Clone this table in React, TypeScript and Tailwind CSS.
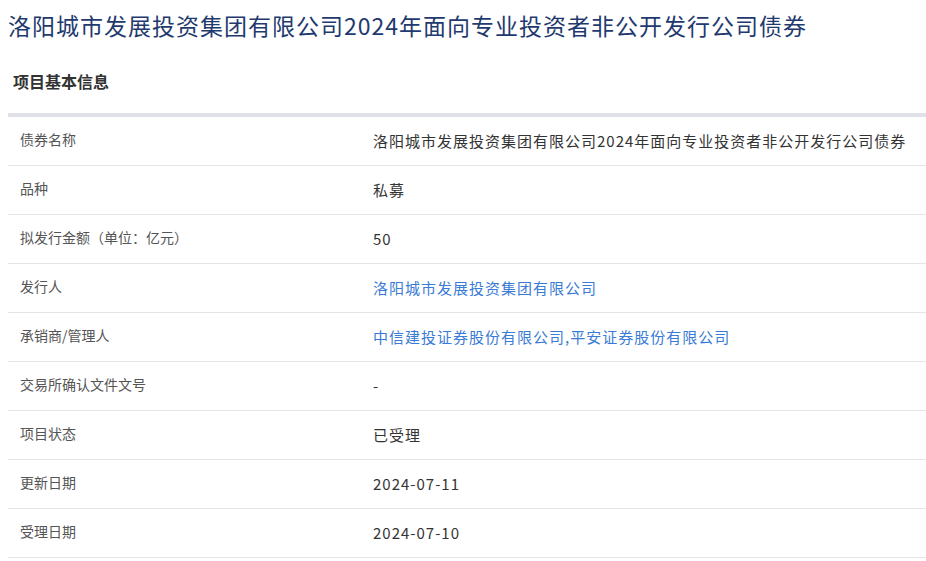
import React from 'react';

interface Row {
  label: string;
  value: string;
  link?: boolean;
}

const rows: Row[] = [
  { label: '债券名称', value: '洛阳城市发展投资集团有限公司2024年面向专业投资者非公开发行公司债券' },
  { label: '品种', value: '私募' },
  { label: '拟发行金额（单位：亿元）', value: '50' },
  { label: '发行人', value: '洛阳城市发展投资集团有限公司', link: true },
  { label: '承销商/管理人', value: '中信建投证券股份有限公司,平安证券股份有限公司', link: true },
  { label: '交易所确认文件文号', value: '-' },
  { label: '项目状态', value: '已受理' },
  { label: '更新日期', value: '2024-07-11' },
  { label: '受理日期', value: '2024-07-10' },
];

const App: React.FC = () => {
  return (
    <div
      className="min-h-screen bg-white pl-2"
      style={{ fontFamily: '"Microsoft YaHei", "Noto Sans CJK SC", "Noto Sans", sans-serif' }}
    >
      {/* Title */}
      <h1 className="pt-[8px] pb-[2px] text-[23px] leading-[34px] tracking-[1px] text-[#1f3a6e] whitespace-nowrap">
        洛阳城市发展投资集团有限公司2024年面向专业投资者非公开发行公司债券
      </h1>

      {/* Section header */}
      <div className="pl-[5px] pt-[25px] pb-[20px] text-[16px] leading-[24px] font-bold text-[#333]">
        项目基本信息
      </div>

      {/* Info table */}
      <div className="border-t-4 border-[#dfe1e6]">
        {rows.map((row) => (
          <div
            key={row.label}
            className="grid grid-cols-[365px_1fr] h-[49px] items-center border-b border-[#e4e4e4]"
          >
            <div className="pl-3 text-[14px] text-[#555] -mt-[3px]">{row.label}</div>
            <div
              className={`text-[15px] tracking-[1px] whitespace-nowrap ${
                row.link ? 'text-[#3a7bd5]' : 'text-[#333]'
              }`}
            >
              {row.value}
            </div>
          </div>
        ))}
      </div>
    </div>
  );
};

export default App;
